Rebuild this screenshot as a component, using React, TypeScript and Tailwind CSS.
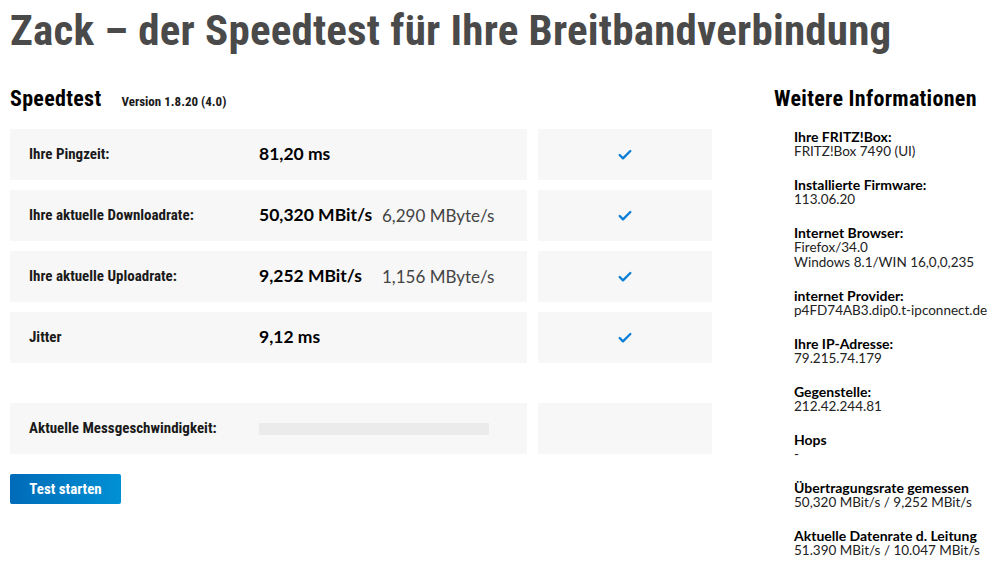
import { Check } from "lucide-react";

const lato = "font-['Lato','Roboto',sans-serif]";
const cond = "font-['Roboto_Condensed','Roboto',sans-serif]";

type Row = { label: string; value: string; extra?: string };

const rows: Row[] = [
  { label: "Ihre Pingzeit:", value: "81,20 ms" },
  { label: "Ihre aktuelle Downloadrate:", value: "50,320 MBit/s", extra: "6,290 MByte/s" },
  { label: "Ihre aktuelle Uploadrate:", value: "9,252 MBit/s", extra: "1,156 MByte/s" },
  { label: "Jitter", value: "9,12 ms" },
];

const infos = [
  { label: "Ihre FRITZ!Box:", lines: ["FRITZ!Box 7490 (UI)"] },
  { label: "Installierte Firmware:", lines: ["113.06.20"] },
  { label: "Internet Browser:", lines: ["Firefox/34.0", "Windows 8.1/WIN 16,0,0,235"] },
  { label: "internet Provider:", lines: ["p4FD74AB3.dip0.t-ipconnect.de"] },
  { label: "Ihre IP-Adresse:", lines: ["79.215.74.179"] },
  { label: "Gegenstelle:", lines: ["212.42.244.81"] },
  { label: "Hops", lines: ["-"] },
  { label: "Übertragungsrate gemessen", lines: ["50,320 MBit/s / 9,252 MBit/s"] },
  { label: "Aktuelle Datenrate d. Leitung", lines: ["51.390 MBit/s / 10.047 MBit/s"] },
];

export default function App() {
  return (
    <div className={`w-[1006px] h-[572px] bg-white overflow-hidden text-[#1a1a1a] ${lato}`}>
      <h1 className={`${cond} pl-[10px] pt-[4px] text-[43px] leading-[52px] font-bold tracking-[0.2px] text-[#4a4a4a] whitespace-nowrap`}>
        Zack – der Speedtest für Ihre Breitbandverbindung
      </h1>
      <div className="flex mt-[26px]">
        <div className="w-[713px] shrink-0 pl-[10px]">
          <div className="flex items-baseline gap-[20px] h-[30px]">
            <h2 className={`${cond} text-[22px] tracking-[0.3px] font-bold text-black`}>Speedtest</h2>
            <span className={`${cond} text-[13px] font-bold`}>Version 1.8.20 (4.0)</span>
          </div>
          <div className="mt-[17px] flex flex-col gap-[10px]">
            {rows.map((r) => (
              <div key={r.label} className="flex gap-[11px] h-[51px]">
                <div className="w-[517px] bg-[#f7f7f7] flex items-center">
                  <span className={`${cond} w-[249px] pl-[19px] text-[15px] font-bold`}>{r.label}</span>
                  <span className="w-[123px] text-[17.5px] font-bold text-black">{r.value}</span>
                  {r.extra && <span className="text-[17px] text-[#444] font-normal">{r.extra}</span>}
                </div>
                <div className="w-[174px] bg-[#f7f7f7] flex items-center justify-center">
                  <Check className="w-[16px] h-[16px] text-[#0a7ed6]" strokeWidth={3.5} />
                </div>
              </div>
            ))}
          </div>
          <div className="flex gap-[11px] h-[51px] mt-[40px]">
            <div className="w-[517px] bg-[#f7f7f7] flex items-center">
              <span className={`${cond} w-[249px] pl-[19px] text-[15px] font-bold`}>Aktuelle Messgeschwindigkeit:</span>
              <div className="w-[230px] h-[12px] bg-[#ebebeb]" />
            </div>
            <div className="w-[174px] bg-[#f7f7f7]" />
          </div>
          <button className={`${cond} mt-[20px] w-[111px] h-[30px] rounded-[2px] bg-gradient-to-r from-[#006bb8] to-[#0090d4] text-white text-[15px] font-bold`}>
            Test starten
          </button>
        </div>
        <div className="pl-[61px] shrink-0">
          <h2 className={`${cond} text-[22px] tracking-[0.3px] font-bold text-black h-[30px] whitespace-nowrap`}>Weitere Informationen</h2>
          <div className="pl-[20px] mt-[17px] flex flex-col gap-[18px]">
            {infos.map((i) => (
              <div key={i.label} className="leading-[15px] whitespace-nowrap">
                <div className="text-[14px] font-bold text-black">{i.label}</div>
                {i.lines.map((l) => (
                  <div key={l} className="text-[13.5px] text-[#222]">{l}</div>
                ))}
              </div>
            ))}
          </div>
        </div>
      </div>
    </div>
  );
}
